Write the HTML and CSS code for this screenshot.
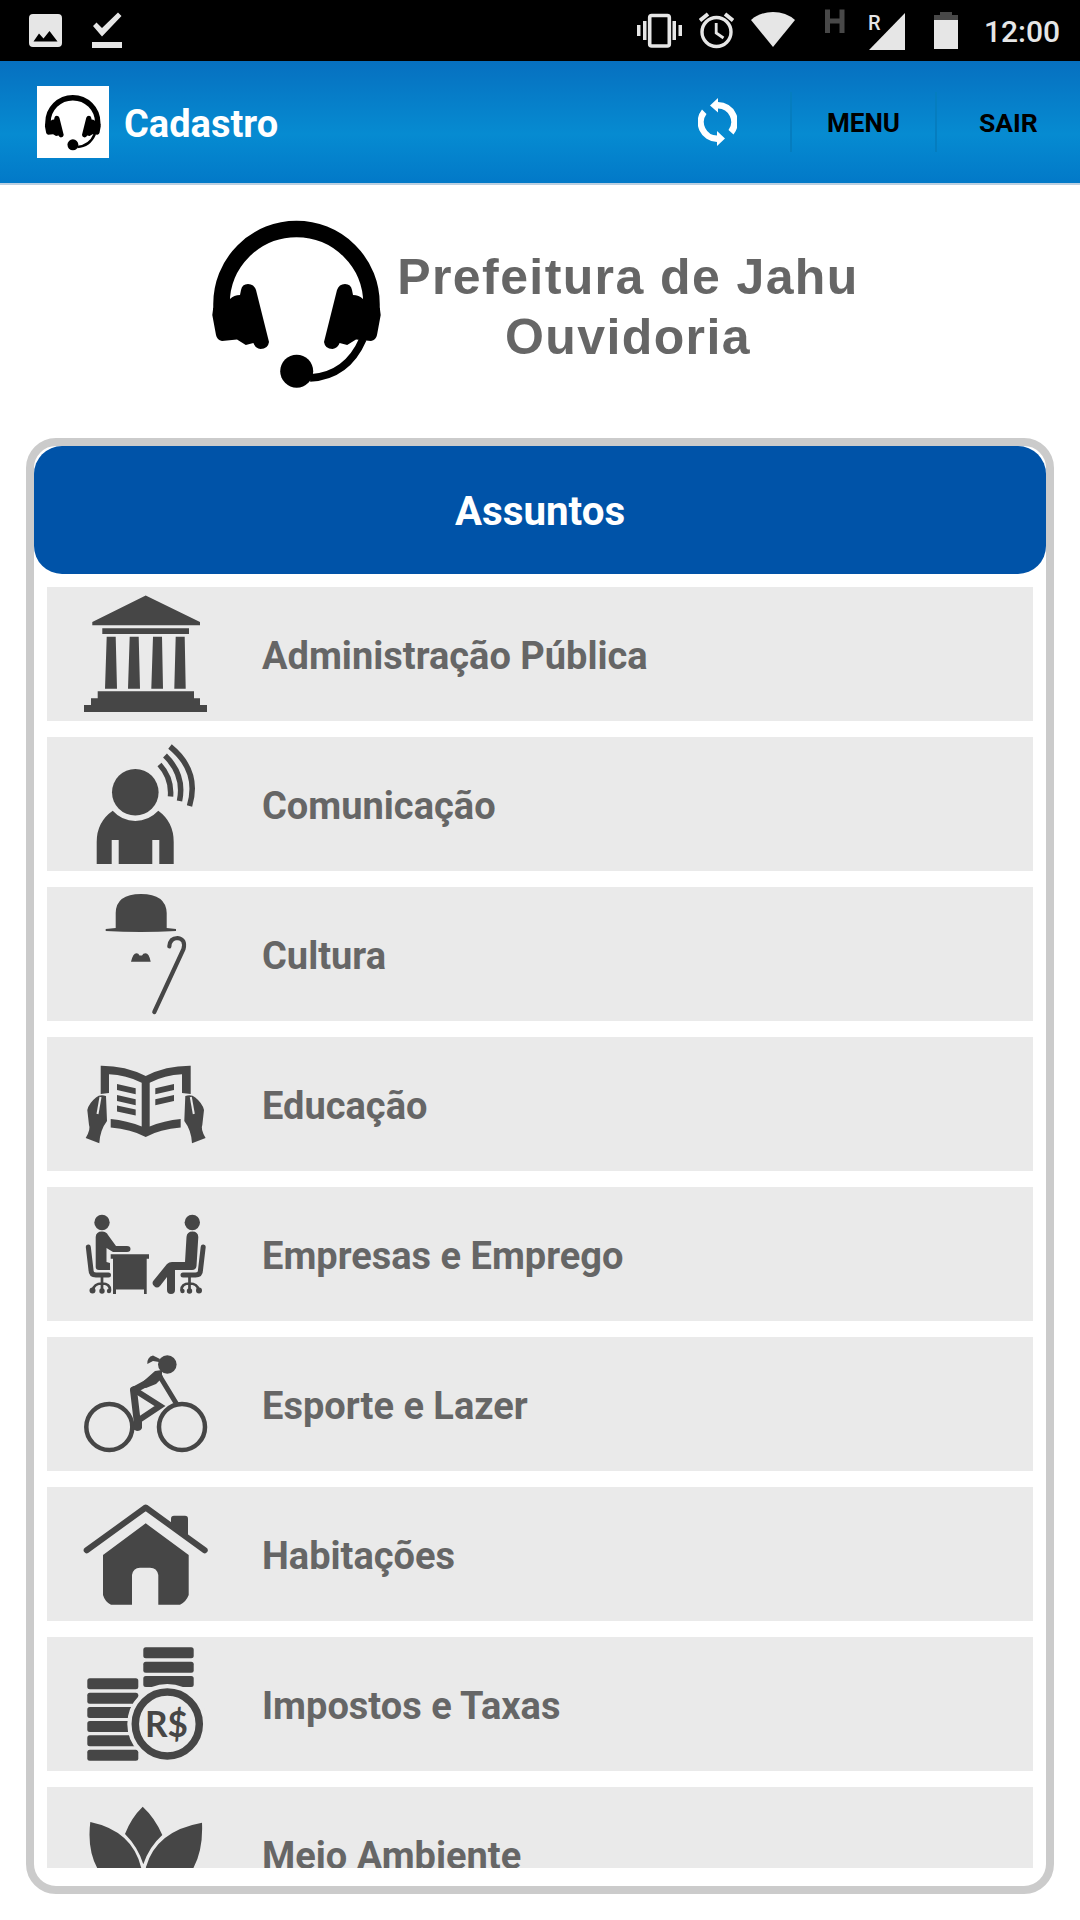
FILE: index.html
```html
<!DOCTYPE html>
<html lang="pt-BR">
<head>
    <meta charset="UTF-8">
    <meta name="viewport" content="width=device-width, initial-scale=1.0">
    <title>Prefeitura de Jahu - Ouvidoria</title>
    <link rel="stylesheet" href="styles.css">
</head>
<body>
    <!-- Shared headset drawing -->
    <svg class="defs" width="0" height="0">
        <symbol id="headset" viewBox="0 0 174 178">
            <path d="M11.5 97V89A75 75 0 0 1 161.5 89V97" fill="none" stroke="#000" stroke-width="16.5"/>
            <g id="ear">
                <path d="M2.3 100L3.2 93L20 84Q24 80 30 80L31 75Q32 69 38 69Q44 69 46 75L59 127Q58 134 50.5 134Q45 133 43.4 128L35.8 130L27 124.5L12 126Q7 125 6 120Z"/>
            </g>
            <use href="#ear" transform="translate(173 0) scale(-1 1)"/>
            <path d="M153 124Q137 161 100 163" fill="none" stroke="#000" stroke-width="7.5"/>
            <circle cx="86.7" cy="156.2" r="16.5"/>
        </symbol>
    </svg>

    <!-- Status bar -->
    <div class="status-bar">
        <svg class="st-image" width="34" height="61" viewBox="0 0 34 61"><path fill-rule="evenodd" d="M4 14H29Q33 14 33 18V43Q33 47 29 47H4Q0 47 0 43V18Q0 14 4 14ZM4.5 41.5H28.5L20.5 31L14.5 38.5L10 33.5Z"/></svg>
        <svg class="st-check" width="30" height="61" viewBox="0 0 30 61"><path d="M0 42H30V48H0ZM1 26L4.500 22.500L10 28L26 12.500L29.500 16L10 36.500Z"/></svg>
        <svg class="st-vibrate" width="45" height="61" viewBox="0 0 45 61"><path d="M0 25H3.500V36H0ZM6 21H9.500V40H6ZM41.500 25H45V36H41.500ZM35.500 21H39V40H35.500Z"/><rect x="12.700" y="15.500" width="19.600" height="30.500" rx="2" fill="none" stroke="#e6e6e6" stroke-width="3.600"/></svg>
        <svg class="st-alarm" width="35" height="61" viewBox="0 0 35 61"><g fill="none" stroke="#e6e6e6"><circle cx="17.500" cy="32" r="14.500" stroke-width="3.400"/><path d="M17.200 23V33L24.500 38" stroke-width="2.800"/><path d="M1 20.500L9 14M34 20.500L26 14" stroke-width="3.800"/></g></svg>
        <svg class="st-wifi" width="44" height="61" viewBox="0 0 44 61"><path d="M0 20Q9 12 22 12T44 20L22 47Z"/></svg>
        <svg class="st-h" width="22" height="61" viewBox="0 0 22 61"><path d="M3.500 9.500V33M18 9.500V33M3.500 21H18" fill="none" stroke="#484848" stroke-width="5"/></svg>
        <svg class="st-signal" width="38" height="61" viewBox="0 0 38 61"><path d="M37 13V50H1Z"/><text x="0" y="29.500">R</text></svg>
        <svg class="st-battery" width="24" height="61" viewBox="0 0 24 61"><path fill="#484848" d="M6 12H18V15H24V20H0V15H6Z"/><path d="M0 20H24V49H0Z"/></svg>
        <span class="clock">12:00</span>
    </div>

    <!-- Action bar -->
    <div class="action-bar">
        <div class="app-icon"><svg width="58" height="59"><use href="#headset"/></svg></div>
        <h1>Cadastro</h1>
        <svg class="refresh" width="39" height="48" viewBox="0 0 39 48"><path d="M20 0L12 7.500L20 14.500V10.500A13.500 13.500 0 0 1 30.500 32L35.500 36.500A20 20 0 0 0 20 4ZM19 48L27 40.500L19 33V37.500A13.500 13.500 0 0 1 8.500 16L4 11.500A20 20 0 0 0 19 44Z"/></svg>
        <a class="action menu">MENU</a>
        <a class="action sair">SAIR</a>
    </div>

    <div class="brand">
        <svg width="174" height="178"><use href="#headset"/></svg>
        <p>Prefeitura de Jahu<br>Ouvidoria</p>
    </div>

    <div class="panel">
        <h2>Assuntos</h2>
        <ul class="subjects">
            <li>
                <svg viewBox="0 0 134 134"><path d="M67.700 8.500L122 35V38.300H14.300V35ZM24.300 41.300H111V47H24.300ZM28.700 49.700H37.700L39 101.700H27ZM51.700 49.700H60.700L62 101.700H50ZM75 49.700H84L85 101.700H73.300ZM97.700 49.700H106.700L107.700 101.700H96.300ZM19.700 104.300H116V111.300H122V118H129V125H6V118H13V111.300H19.700Z"/></svg>
                <span>Administração Pública</span>
            </li>
            <li>
                <svg viewBox="0 0 134 134"><circle cx="57.300" cy="55.300" r="23.300"/><path d="M34.700 73.800Q44 84 57.300 84T80.300 73.800Q95.700 85 95.700 105V127H81.300V103H74.300V127H40.700V103H33.700V127H18.700V105Q18.700 85 34.700 73.800Z"/><path class="line flat" stroke-width="5.500" d="M81.500 27.500Q94 41 92.500 59.500M87 18.500Q107 38 101.500 64M92 9.500Q122 34 111.500 69"/></svg>
                <span>Comunicação</span>
            </li>
            <li>
                <svg viewBox="0 0 134 134"><path d="M37.700 41V26Q38 7 63 7T88.700 26V41L98 42V44Q63 46 27.700 44V42ZM53 74.700Q55 66.300 58.500 66.300Q60.500 66.300 61.500 68.500H64Q65 66.300 67.500 66.300Q71 66.300 72.700 74.700Z"/><path class="line" stroke-width="4.200" d="M91.300 59.500Q92 51 99.500 51Q108 52 105.500 62L76.300 125"/></svg>
                <span>Cultura</span>
            </li>
            <li>
                <svg viewBox="0 0 134 134"><path d="M22.700 28.700Q47 28.500 67.700 39Q88 28.500 112.700 28.700V57L104 56V37.300Q87 38 71.700 45.700V89.500Q86 83.500 102.700 82V90.500Q82 92 67.700 100Q53 92 32.700 90.500V82Q49 83.500 63.700 89.500V45.700Q48 38 31 37.300V56L22.700 57Z"/><path d="M39 47L57.700 51.300V57.300L39 53ZM39 58L57.700 62.300V68.300L39 64ZM39 68.500L57.700 72.500V78.500L39 74.500ZM96 47L77.300 51.300V57.300L96 53ZM96 58L77.300 62.300V68.300L96 64Z"/><g id="hand"><path d="M28 59L29 84Q22 93 21.300 106.300L7.700 101Q13 92 11 88L9.300 73Q11 66 18 60.500Q22 57 28 59Z"/><path class="gap" d="M22.500 60L19.500 77"/></g><use href="#hand" transform="translate(135.300 0) scale(-1 1)"/></svg>
                <span>Educação</span>
            </li>
            <li>
                <svg viewBox="0 0 134 134"><circle cx="24" cy="35.500" r="7.700"/><path d="M17.700 50Q18 44.500 24 44.500Q28.500 44.500 30 48L38 59H49Q52.500 59 52.500 62T49 65H35L28.500 61V75L32 76V83H21Q17.700 83 17.700 80Z"/><path d="M32.700 67.300H71V71.700H68.700V107H66V102.500H38V107H35V71.700H32.700Z"/><circle cx="114.300" cy="35.500" r="7.700"/><path d="M108.500 50Q109 44.500 114.500 44.500T120.300 50L118.500 79Q118 83 114 83H97V103Q97 107 93 107T89 103V90L82 99Q79 102 76 99T76 93L89 77Q91 75 94 75H107Z"/><g id="chair"><path class="line" stroke-width="5" d="M10.300 60L13 83Q13 88 18 88H30.500"/><path class="line" stroke-width="2.700" d="M24 90V103M15 103Q16 96.500 24 96.500T32 103"/><circle cx="14.500" cy="103.500" r="3"/><circle cx="24" cy="104" r="2.700"/><circle cx="31" cy="104" r="2.200"/></g><use href="#chair" transform="translate(135.500 0) scale(-1 1)"/></svg>
                <span>Empresas e Emprego</span>
            </li>
            <li>
                <svg viewBox="0 0 134 134"><g class="line"><circle cx="31.300" cy="90" r="23" stroke-width="4.500"/><circle cx="104" cy="90" r="23" stroke-width="4.500"/><path stroke-width="7" d="M81 39.500L56 53"/><path stroke-width="5" d="M81 38L98 66"/><path stroke-width="6" d="M56 52.500L82 69L61 83"/><path stroke-width="7" d="M55.500 53L59.500 87"/></g><circle cx="89.300" cy="27.500" r="9.300"/><path d="M69.300 27Q69 20 75 18.500L82 22L81 25L75 24ZM77 34L84 33V41L78 47L68 51L60 49ZM57 84H64V91Q63 94 59 94L54 92Z"/></svg>
                <span>Esporte e Lazer</span>
            </li>
            <li>
                <svg viewBox="0 0 134 134"><path class="line" stroke-width="6" stroke-linejoin="round" d="M8.700 63.300L67.700 20.500L126.700 63.300"/><path d="M93 38V32Q93 28.700 96 28.700H107Q110 28.700 110 32V51ZM67.700 36.300L110.700 68V108Q108 115 102 117.700H80.300V88Q79 80.700 72 80.700H62Q55 81 54 88V117.700H33Q27 115 25 108V68Z"/></svg>
                <span>Habitações</span>
            </li>
            <li>
                <svg viewBox="0 0 134 134"><g><rect x="65.300" y="10.300" width="50.400" height="11" rx="2.500"/><rect x="65.300" y="24.700" width="50.400" height="11" rx="2.500"/><rect x="65.300" y="39" width="50.400" height="11" rx="2.500"/><rect x="9.300" y="41.300" width="51" height="11" rx="2.500"/><rect x="9.300" y="55.700" width="51" height="11" rx="2.500"/><rect x="9.300" y="70" width="51" height="11" rx="2.500"/><rect x="9.300" y="84" width="51" height="11" rx="2.500"/><rect x="9.300" y="98.300" width="51" height="11" rx="2.500"/><rect x="9.300" y="112.700" width="51" height="11" rx="2.500"/></g><circle class="coin" cx="89.300" cy="87" r="36"/><circle class="line" cx="89.300" cy="87" r="32" stroke-width="7.500"/><text class="money" x="67" y="99.700" textLength="43" lengthAdjust="spacingAndGlyphs">R$</text></svg>
                <span>Impostos e Taxas</span>
            </li>
            <li>
                <svg viewBox="0 0 134 134"><path d="M64.700 19.700Q77 31 84.300 48Q71 60 65.300 77.300Q60 60 47 47Q53 31 64.700 19.700ZM12.300 35Q55 44 63.500 82Q64 105 64 115Q5 95 12.300 35ZM124 35.700Q78 44 68 80Q66 105 67 115Q127 100 124 35.700Z"/></svg>
                <span>Meio Ambiente</span>
            </li>
        </ul>
    </div>
</body>
</html>
```
FILE: styles.css
```css
* {
    box-sizing: border-box;
}
body {
    margin: 0;
    height: 1920px;
    display: flex;
    flex-direction: column;
    overflow: hidden;
    background: #fff;
    font-family: Roboto, sans-serif;
}
svg {
    display: block;
    flex-shrink: 0;
}
.defs {
    position: absolute;
}
.status-bar {
    display: flex;
    height: 61px;
    flex-shrink: 0;
    padding-left: 29px;
    background: #000;
    color: #e6e6e6;
}
.status-bar svg {
    fill: #e6e6e6;
}
.st-check {
    margin-left: 29px;
}
.st-vibrate {
    margin-left: 515px;
}
.st-alarm {
    margin-left: 17px;
}
.st-wifi {
    margin-left: 17px;
}
.st-h {
    margin-left: 29px;
}
.st-signal {
    margin-left: 22px;
    font-size: 20px;
    font-weight: 500;
}
.st-battery {
    margin-left: 28px;
}
.clock {
    margin-left: 26px;
    font-size: 30px;
    font-weight: 500;
    line-height: 63px;
}
.action-bar {
    display: flex;
    align-items: center;
    height: 124px;
    flex-shrink: 0;
    padding-left: 37px;
    background: linear-gradient(#0670c0, #068bd1 60%, #0279c8);
    border-bottom: 2px solid #bccfe0;
}
.app-icon {
    width: 72px;
    height: 72px;
    padding: 7px;
    background: #fff;
}
.action-bar h1 {
    width: 559px;
    margin: 0;
    padding: 3px 0 0 15px;
    font-size: 38px;
    color: #fff;
}
.refresh {
    margin-left: 30px;
    fill: #fff;
}
.action {
    height: 60px;
    border-left: 2px solid #057dbf;
    font-size: 26px;
    font-weight: 700;
    line-height: 62px;
    color: #000;
}
.menu {
    width: 145px;
    margin-left: 53px;
    padding-left: 35px;
}
.sair {
    padding-left: 42px;
    font-size: 26.5px;
}
.brand {
    display: flex;
    height: 253px;
    padding: 30px 0 0 210px;
}
.brand p {
    width: 470px;
    margin: 32px 0 0 9px;
    font-family: "Liberation Sans", Arial, sans-serif;
    font-size: 50px;
    font-weight: bold;
    line-height: 60px;
    letter-spacing: 1.4px;
    text-align: center;
    white-space: nowrap;
    color: #666;
}
.panel {
    display: flex;
    flex-direction: column;
    height: 1456px;
    flex-shrink: 0;
    margin: 0 26px;
    padding-bottom: 18px;
    border: 8px solid #cbcbcb;
    border-radius: 30px;
}
.panel h2 {
    height: 128px;
    flex-shrink: 0;
    margin: 0 0 13px;
    border-radius: 28px;
    background: #0053a8;
    font-size: 40.3px;
    line-height: 132px;
    text-align: center;
    color: #fff;
}
.subjects {
    flex: 1;
    min-height: 0;
    margin: 0 13px;
    padding: 0;
    overflow: hidden;
    list-style: none;
}
.subjects li {
    display: flex;
    align-items: center;
    height: 134px;
    margin-bottom: 16px;
    padding-left: 31px;
    background: #eaeaea;
    font-size: 38px;
    font-weight: 700;
    color: #666;
}
.subjects svg {
    width: 134px;
    height: 134px;
    margin-right: 50px;
    fill: #464646;
}
.subjects span {
    padding-top: 3px;
}
.subjects .line {
    fill: none;
    stroke: #464646;
    stroke-linecap: round;
}
.subjects .flat {
    stroke-linecap: butt;
}
.subjects .gap {
    stroke: #eaeaea;
    stroke-width: 2;
}
.subjects .coin {
    fill: #eaeaea;
    stroke: #eaeaea;
    stroke-width: 8px;
}
.money {
    font-family: Lato, sans-serif;
    font-size: 36px;
    font-weight: 700;
}
```
